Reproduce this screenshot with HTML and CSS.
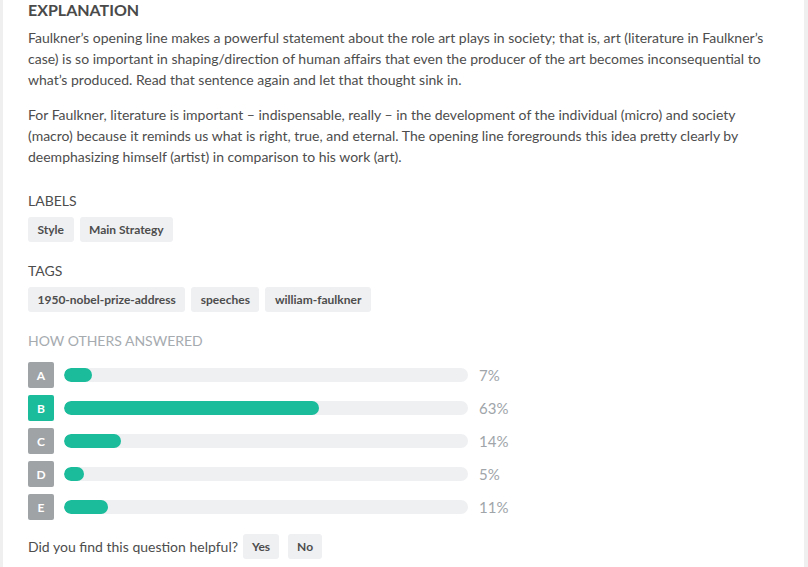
FILE: index.html
```html
<!DOCTYPE html>
<html>
<head>
<meta charset="utf-8">
<link rel="stylesheet" href="styles.css">
</head>
<body>
<main class="panel">
  <h2 class="title">EXPLANATION</h2>
  <p class="para">Faulkner’s opening line makes a powerful statement about the role art plays in society; that is, art (literature in Faulkner’s case) is so important in shaping/direction of human affairs that even the producer of the art becomes inconsequential to what’s produced. Read that sentence again and let that thought sink in.</p>
  <p class="para">For Faulkner, literature is important – indispensable, really – in the development of the individual (micro) and society (macro) because it reminds us what is right, true, and eternal. The opening line foregrounds this idea pretty clearly by deemphasizing himself (artist) in comparison to his work (art).</p>

  <section class="group labels">
    <h3 class="label-head">LABELS</h3>
    <div class="chips">
      <span class="chip">Style</span>
      <span class="chip">Main Strategy</span>
    </div>
  </section>

  <section class="group tags">
    <h3 class="label-head">TAGS</h3>
    <div class="chips">
      <span class="chip">1950-nobel-prize-address</span>
      <span class="chip">speeches</span>
      <span class="chip">william-faulkner</span>
    </div>
  </section>

  <section class="group answers">
    <h3 class="label-head muted">HOW OTHERS ANSWERED</h3>
    <div class="rows">
      <div class="row"><span class="letter">A</span><div class="track"><div class="fill" style="width:7%"></div></div><span class="pct">7%</span></div>
      <div class="row"><span class="letter correct">B</span><div class="track"><div class="fill" style="width:63%"></div></div><span class="pct">63%</span></div>
      <div class="row"><span class="letter">C</span><div class="track"><div class="fill" style="width:14%"></div></div><span class="pct">14%</span></div>
      <div class="row"><span class="letter">D</span><div class="track"><div class="fill" style="width:5%"></div></div><span class="pct">5%</span></div>
      <div class="row"><span class="letter">E</span><div class="track"><div class="fill" style="width:11%"></div></div><span class="pct">11%</span></div>
    </div>
  </section>

  <div class="helpful">
    <span class="helpful-q">Did you find this question helpful?</span>
    <button class="btn">Yes</button>
    <button class="btn">No</button>
  </div>
</main>
</body>
</html>
```
FILE: styles.css
```css
html, body {
  margin: 0;
  padding: 0;
  height: 100%;
}
body {
  background: #efefef;
  font-family: Lato, "Open Sans", sans-serif;
  color: #4d4d4d;
  overflow: hidden;
}
.panel {
  background: #ffffff;
  margin: 0 4px 0 3px;
  padding: 0 25px;
  min-height: 100%;
  box-sizing: border-box;
}
.title {
  margin: 0;
  font-size: 16px;
  font-weight: 700;
  line-height: 20px;
  color: #4a4a4a;
}
.para {
  margin: 7px 0 0;
  font-size: 14px;
  line-height: 21px;
  color: #4d4d4d;
}
.para + .para {
  margin-top: 14px;
}
.labels {
  margin-top: 25px;
}
.tags {
  margin-top: 20px;
}
.answers {
  margin-top: 20px;
}
.label-head {
  margin: 0 0 8px;
  font-size: 14px;
  font-weight: 400;
  line-height: 17px;
  color: #4d4d4d;
}
.label-head.muted {
  color: #a6abb0;
  margin-bottom: 13px;
}
.chips {
  display: flex;
  gap: 6px;
}
.chip {
  display: flex;
  align-items: center;
  height: 25px;
  padding: 0 9.5px;
  background: #eff0f2;
  border-radius: 3px;
  font-size: 12px;
  font-weight: 700;
  color: #4d4d4d;
}
.rows {
  display: flex;
  flex-direction: column;
  gap: 7px;
}
.row {
  display: flex;
  align-items: center;
}
.letter {
  width: 26px;
  height: 26px;
  border-radius: 2px;
  background: #9fa3a6;
  color: #fff;
  font-size: 12px;
  font-weight: 700;
  display: flex;
  align-items: center;
  justify-content: center;
  flex: none;
}
.letter.correct {
  background: #1abc9c;
}
.track {
  margin-left: 10px;
  width: 404px;
  height: 14px;
  border-radius: 7px;
  background: #eff0f2;
  flex: none;
  overflow: hidden;
}
.fill {
  height: 100%;
  border-radius: 7px;
  background: #1abc9c;
}
.pct {
  margin-left: 11px;
  font-size: 15px;
  color: #a0a5aa;
}
.helpful {
  display: flex;
  align-items: center;
  margin-top: 14px;
  font-size: 14px;
  color: #4d4d4d;
}
.helpful-q {
  margin-right: 5px;
}
.btn {
  height: 25px;
  padding: 0 9px;
  margin-right: 9px;
  border: none;
  border-radius: 3px;
  background: #eff0f2;
  font-family: Lato, sans-serif;
  font-size: 12px;
  font-weight: 700;
  color: #4d4d4d;
}
```
